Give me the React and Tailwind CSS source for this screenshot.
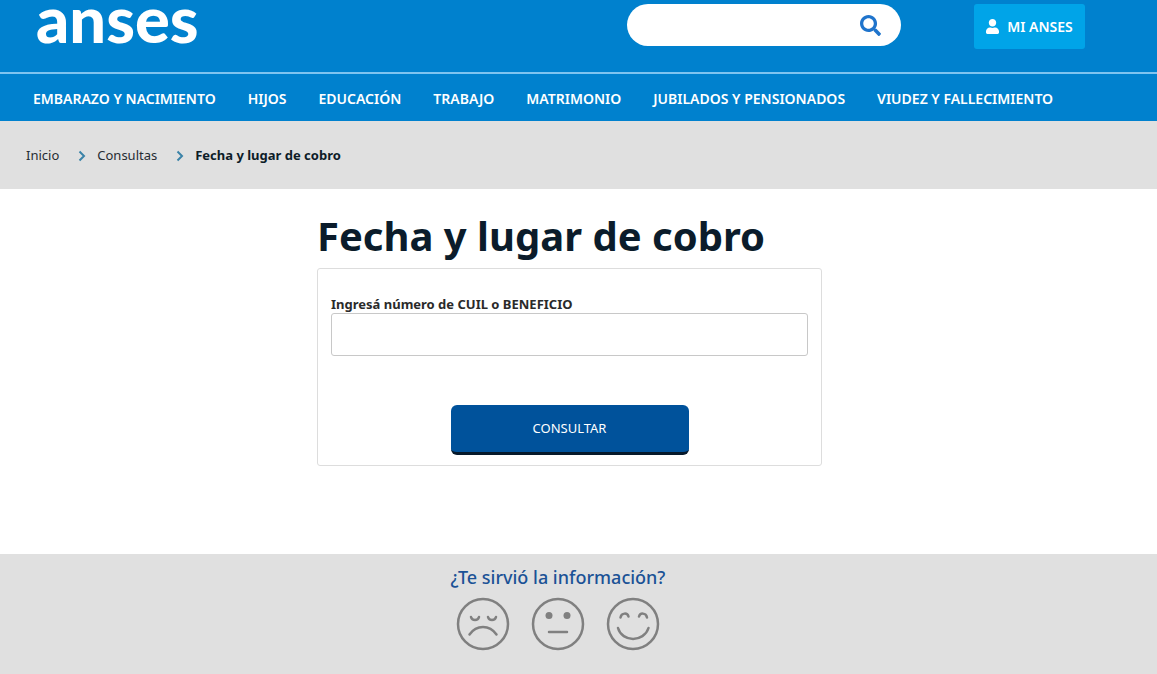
import { useState } from 'react';
import { FaSearch, FaUser } from 'react-icons/fa';

const NAV_ITEMS = [
  'EMBARAZO Y NACIMIENTO',
  'HIJOS',
  'EDUCACIÓN',
  'TRABAJO',
  'MATRIMONIO',
  'JUBILADOS Y PENSIONADOS',
  'VIUDEZ Y FALLECIMIENTO',
];

function Header() {
  return (
    <header className="bg-[#0081ce] text-white">
      <div className="h-[72px] flex items-start pl-9 pr-[72px]">
        <a
          href="#inicio"
          className="font-['Lato',sans-serif] font-black text-[65px] leading-9"
        >
          anses
        </a>
        <form
          role="search"
          onSubmit={(e) => e.preventDefault()}
          className="ml-auto mt-1 w-[274px] h-[42px] flex items-center bg-white rounded-full px-5"
        >
          <input
            type="search"
            aria-label="Buscar"
            className="flex-1 min-w-0 bg-transparent text-gray-800 text-sm outline-none"
          />
          <button type="submit" aria-label="Buscar" className="text-[#1f74cc]">
            <FaSearch className="w-[21px] h-[21px]" />
          </button>
        </form>
        <a
          href="#mi-anses"
          className="ml-[73px] mt-1 w-[111px] h-[45px] flex items-center justify-center gap-2 bg-[#00a4e8] rounded-[3px] text-sm font-semibold whitespace-nowrap"
        >
          <FaUser className="w-[13px] h-[15px]" />
          MI ANSES
        </a>
      </div>

      <nav className="h-[49px] border-t-2 border-[#7fc4f0] flex items-center gap-8 pt-0.5 pl-[33px] text-sm font-semibold whitespace-nowrap">
        {NAV_ITEMS.map((item) => (
          <a key={item} href="#menu" className="hover:underline">
            {item}
          </a>
        ))}
      </nav>
    </header>
  );
}

function Chevron() {
  return (
    <svg viewBox="0 0 8 12" className="w-2 h-3" fill="none" aria-hidden="true">
      <path d="M1.5 1.5 6 6 1.5 10.5" stroke="#3b83a8" strokeWidth="2" />
    </svg>
  );
}

function Breadcrumb() {
  return (
    <nav
      aria-label="Ruta"
      className="h-[68px] bg-[#e0e0e0] flex items-center pt-0.5 pl-[26px] text-[13px] text-[#262c33]"
    >
      <a href="#inicio" className="mr-[19px]">
        Inicio
      </a>
      <Chevron />
      <a href="#consultas" className="ml-[11px] mr-[19px]">
        Consultas
      </a>
      <Chevron />
      <span className="ml-[11px] font-bold text-[#0d1c28]">
        Fecha y lugar de cobro
      </span>
    </nav>
  );
}

function FaceButton({ label, selected, onClick, children }) {
  return (
    <button
      type="button"
      aria-label={label}
      aria-pressed={selected}
      onClick={onClick}
      className={selected ? 'text-[#00529b]' : 'text-[#808080]'}
    >
      <svg
        viewBox="0 0 54 54"
        className="w-[54px] h-[54px]"
        fill="none"
        stroke="currentColor"
        strokeWidth="2.5"
        strokeLinecap="round"
      >
        <circle cx="27" cy="27" r="25" />
        {children}
      </svg>
    </button>
  );
}

function Feedback() {
  const [vote, setVote] = useState(null);

  return (
    <footer className="flex-1 bg-[#e0e0e0] pt-[9px] pb-[22px] pr-[41px] flex flex-col items-center">
      <h2 className="text-[18px] leading-7 font-medium text-[#1b5296]">
        ¿Te sirvió la información?
      </h2>
      <div className="mt-[6px] flex gap-[21px]">
        <FaceButton
          label="No"
          selected={vote === 'no'}
          onClick={() => setVote('no')}
        >
          <path d="M15 20c1 4 7 4 8 0M32 20c1 4 7 4 8 0" />
          <path d="M13.5 37.5c7-10 20-10 27 0" />
        </FaceButton>
        <FaceButton
          label="Más o menos"
          selected={vote === 'regular'}
          onClick={() => setVote('regular')}
        >
          <circle cx="18" cy="18.5" r="3.5" fill="currentColor" stroke="none" />
          <circle cx="36" cy="18.5" r="3.5" fill="currentColor" stroke="none" />
          <path d="M18 35h18" />
        </FaceButton>
        <FaceButton
          label="Sí"
          selected={vote === 'si'}
          onClick={() => setVote('si')}
        >
          <path d="M14.5 20.5c1-5 7-5 8-1M33 19.5c1-4 7-4 8 1" />
          <path d="M12 31c4 14.5 26 14.5 30.5 0" />
        </FaceButton>
      </div>
    </footer>
  );
}

export default function App() {
  const [numero, setNumero] = useState('');

  return (
    <div className="min-h-screen flex flex-col bg-white font-['Noto_Sans','Open_Sans',sans-serif]">
      <Header />
      <Breadcrumb />

      <main className="pt-[19px] pb-[88px] pr-[18px]">
        <div className="w-full max-w-[505px] mx-auto">
          <h1 className="text-[40px] leading-[56px] font-bold text-[#0b1c2b] whitespace-nowrap">
            Fecha y lugar de cobro
          </h1>
          <form
            onSubmit={(e) => e.preventDefault()}
            className="mt-1 border border-[#dddddd] rounded-[3px] px-[13px] pt-[26px] pb-[10px] flex flex-col"
          >
            <label
              htmlFor="numero"
              className="text-[13px] leading-[18px] font-bold text-[#2a2a2a]"
            >
              Ingresá número de CUIL o BENEFICIO
            </label>
            <input
              id="numero"
              type="text"
              value={numero}
              onChange={(e) => setNumero(e.target.value)}
              className="w-full h-[43px] border border-[#c8c8c8] rounded-[3px] px-3 text-sm"
            />
            <button
              type="submit"
              className="mt-[49px] self-center w-[238px] h-[50px] bg-[#00529b] border-b-[3px] border-[#06192b] rounded-md text-white text-[13px]"
            >
              CONSULTAR
            </button>
          </form>
        </div>
      </main>

      <Feedback />
    </div>
  );
}
